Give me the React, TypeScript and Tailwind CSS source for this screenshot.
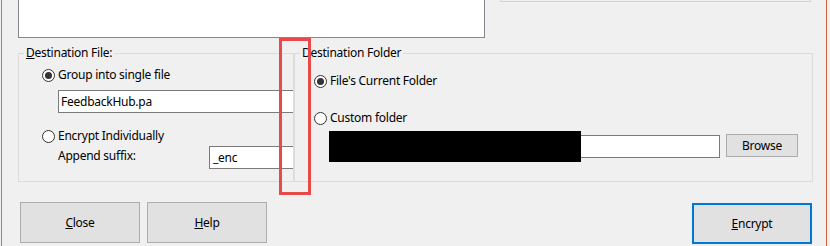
import React from 'react';

const FONT = "font-['Noto_Sans',_'DejaVu_Sans',_sans-serif]";

function Radio({ checked, label }: { checked?: boolean; label: string }) {
  return (
    <div className="flex items-center h-[16px] gap-[3px]">
      <span className="w-[13px] h-[13px] rounded-full border border-[#333333] bg-white flex items-center justify-center shrink-0">
        {checked && <span className="w-[7px] h-[7px] rounded-full bg-[#333333]" />}
      </span>
      <span className="leading-[16px]">{label}</span>
    </div>
  );
}

function Button({ children, focused }: { children: React.ReactNode; focused?: boolean }) {
  return (
    <button
      className={`w-[120px] h-[41px] bg-[#e1e1e1] text-black text-[12px] ${
        focused ? 'border-2 border-[#0078d7]' : 'border border-[#adadad]'
      }`}
    >
      {children}
    </button>
  );
}

export default function App() {
  return (
    <div className={`w-[830px] h-[246px] overflow-hidden bg-[#f0f0f0] flex text-[12px] tracking-[-0.25px] text-black ${FONT}`}>
      <div className="w-px bg-[#f0f0f0]" />
      <div className="w-px bg-[#e66a2e]" />

      <div className="w-[824px] flex flex-col relative">
        {/* top row */}
        <div className="flex h-[38px] items-start">
          <div className="ml-[16px] w-[467px] h-[38px] bg-white border border-t-0 border-[#828790]" />
          <div className="ml-[15px] w-[311px] h-[2px] border border-t-0 border-[#d4d4d4]" />
        </div>

        {/* group boxes */}
        <div className="flex mt-[7px]">
          <fieldset className="ml-[16px] w-[276px] h-[137px] border border-[#dcdcdc] min-w-0 overflow-hidden">
            <legend className="ml-[5px] px-[2px] leading-[16px]">
              <span className="underline">D</span>estination File:
            </legend>
            <div className="flex flex-col">
              <div className="mt-[6px] pl-[23px]">
                <Radio checked label="Group into single file" />
              </div>
              <div className="mt-[7px] pl-[39px] flex">
                <div className="flex-1 h-[23px] bg-white border border-r-0 border-[#7a7a7a] pl-[2px] leading-[22px]">
                  FeedbackHub.pa
                </div>
              </div>
              <div className="mt-[15px] pl-[23px]">
                <Radio label="Encrypt Individually" />
              </div>
              <div className="mt-[2px] pl-[39px] flex">
                <span className="w-[151px] pt-[2px] leading-[16px]">Append suffix:</span>
                <div className="flex-1 h-[23px] bg-white border border-r-0 border-[#7a7a7a] pl-[3px] leading-[22px]">
                  _enc
                </div>
              </div>
            </div>
          </fieldset>

          <fieldset className="w-[519px] h-[137px] border border-[#dcdcdc] min-w-0">
            <legend className="ml-[5px] px-[2px] leading-[16px]">Destination Folder</legend>
            <div className="flex flex-col">
              <div className="mt-[12px] pl-[19px]">
                <Radio checked label="File's Current Folder" />
              </div>
              <div className="mt-[21px] pl-[19px]">
                <Radio label="Custom folder" />
              </div>
              <div className="mt-[9px] pl-[34px] flex items-start">
                <div className="relative w-[391px] h-[23px] bg-white border border-[#7a7a7a]">
                  <div className="absolute -top-[5px] -left-px w-[252px] h-[31px] bg-black" />
                </div>
                <button className="ml-[6px] -mt-px w-[72px] h-[23px] bg-[#e1e1e1] border border-[#adadad] text-[12px]">
                  Browse
                </button>
              </div>
            </div>
          </fieldset>
        </div>

        {/* buttons */}
        <div className="flex mt-[20px] items-start">
          <div className="ml-[18px]">
            <Button>
              <span className="underline">C</span>lose
            </Button>
          </div>
          <div className="ml-[7px]">
            <Button>
              <span className="underline">H</span>elp
            </Button>
          </div>
          <div className="ml-auto mr-[14px] mt-px">
            <Button focused>
              <span className="underline">E</span>ncrypt
            </Button>
          </div>
        </div>

        {/* annotation highlight */}
        <div className="absolute left-[277px] top-[38px] w-[32px] h-[157px] border-[3px] border-[#e84a4a]" />
      </div>

      <div className="w-px bg-[#c8643c]" />
      <div className="w-[3px] bg-[#f0f0f0]" />
    </div>
  );
}
